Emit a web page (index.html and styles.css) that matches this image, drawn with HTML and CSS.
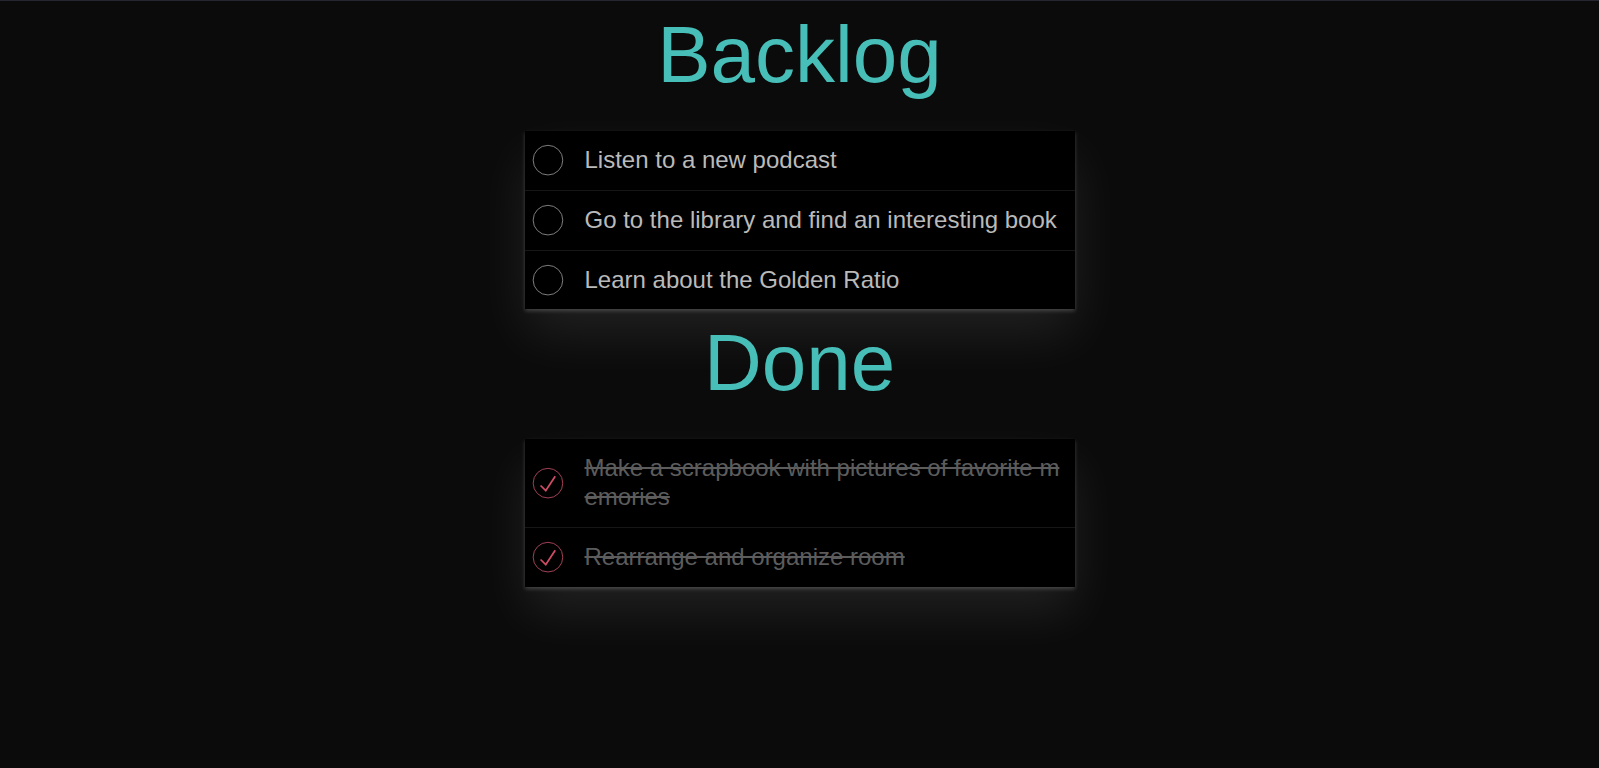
FILE: index.html
```html
<!DOCTYPE html>
<html lang="en">
<head>
<meta charset="utf-8">
<title>Todos</title>
<link rel="stylesheet" href="styles.css">
</head>
<body>
<main class="board">
  <section class="section">
    <h1 class="title">Backlog</h1>
    <ul class="list">
      <li class="item">
        <span class="toggle"><svg viewBox="-10 -18 100 135" width="40" height="40"><circle cx="50" cy="50" r="50" fill="none" stroke="#8c8c8c" stroke-width="3"/></svg></span>
        <span class="label">Listen to a new podcast</span>
      </li>
      <li class="item">
        <span class="toggle"><svg viewBox="-10 -18 100 135" width="40" height="40"><circle cx="50" cy="50" r="50" fill="none" stroke="#8c8c8c" stroke-width="3"/></svg></span>
        <span class="label">Go to the library and find an interesting book</span>
      </li>
      <li class="item">
        <span class="toggle"><svg viewBox="-10 -18 100 135" width="40" height="40"><circle cx="50" cy="50" r="50" fill="none" stroke="#8c8c8c" stroke-width="3"/></svg></span>
        <span class="label">Learn about the Golden Ratio</span>
      </li>
    </ul>
  </section>
  <section class="section">
    <h1 class="title">Done</h1>
    <ul class="list">
      <li class="item done">
        <span class="toggle"><svg viewBox="-10 -18 100 135" width="40" height="40"><circle cx="50" cy="50" r="50" fill="none" stroke="#b4495f" stroke-width="3"/><path fill="#cf4c66" d="M72 25L42 71 27 56l-4 4 20 20 34-52z"/></svg></span>
        <span class="label">Make a scrapbook with pictures of favorite memories</span>
      </li>
      <li class="item done">
        <span class="toggle"><svg viewBox="-10 -18 100 135" width="40" height="40"><circle cx="50" cy="50" r="50" fill="none" stroke="#b4495f" stroke-width="3"/><path fill="#cf4c66" d="M72 25L42 71 27 56l-4 4 20 20 34-52z"/></svg></span>
        <span class="label">Rearrange and organize room</span>
      </li>
    </ul>
  </section>
</main>
</body>
</html>
```

FILE: styles.css
```css
html, body {
  margin: 0;
  padding: 0;
  background: #0b0b0b;
  min-height: 100%;
}

body {
  box-shadow: inset 0 1px 0 #262633;
  padding-top: 1px;
  font-family: "Liberation Sans", Arial, Helvetica, sans-serif;
  min-height: 767px;
}

.board {
  width: 550px;
  margin: 0 auto;
  display: flex;
  flex-direction: column;
}

.title {
  margin: 8px 0 30px;
  font-size: 80px;
  font-weight: 400;
  line-height: normal;
  text-align: center;
  color: #47bfb8;
}

.list {
  list-style: none;
  margin: 0;
  padding: 0;
  background: #000;
  box-shadow: 0 2px 4px 0 rgba(255, 255, 255, 0.2), 0 25px 50px 0 rgba(255, 255, 255, 0.09);
}

.item {
  display: flex;
  align-items: center;
  border-bottom: 1px solid #161616;
}

.item:last-child {
  border-bottom: none;
}

.toggle {
  flex: none;
  width: 40px;
  height: 40px;
  display: block;
}

.toggle svg {
  display: block;
}

.label {
  flex: 1;
  min-width: 0;
  padding: 15px 15px 15px 20px;
  font-size: 24px;
  line-height: 1.2;
  color: #bababa;
  word-break: break-all;
}

.done .label {
  color: #5c5c5c;
  text-decoration: line-through;
}
```
